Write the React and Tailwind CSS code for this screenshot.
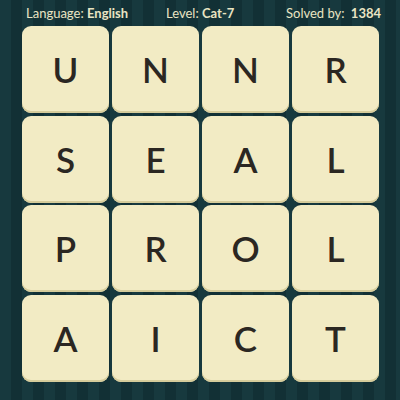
const rows = [
  ['U', 'N', 'N', 'R'],
  ['S', 'E', 'A', 'L'],
  ['P', 'R', 'O', 'L'],
  ['A', 'I', 'C', 'T'],
];

export default function App() {
  return (
    <div className="w-[400px] h-[400px] overflow-hidden bg-[#143439] bg-[repeating-linear-gradient(90deg,#17393e_0px,#17393e_11px,#123035_11px,#123035_22px)] font-['Lato',sans-serif]">
      {/* stats bar */}
      <div className="flex h-[26px] items-center pl-[26px] text-[13px] leading-none text-[#e9e4c3]">
        <div className="w-[140px]">
          Language: <span className="font-bold">English</span>
        </div>
        <div className="w-[120px]">
          Level: <span className="font-bold">Cat-7</span>
        </div>
        <div>
          Solved by: <span className="font-bold ml-[3px]">1384</span>
        </div>
      </div>

      {/* letter board */}
      <div className="grid grid-cols-[repeat(4,87px)] gap-x-[3px] gap-y-[2.5px] pl-[22px]">
        {rows.flat().map((ch, i) => (
          <div
            key={i}
            className="h-[87px] rounded-[9px] bg-[#f2ebc4] shadow-[inset_0_-2px_0_#d6cc9b] flex items-center justify-center text-[35px] font-semibold text-[#2b2722]"
          >
            {ch}
          </div>
        ))}
      </div>
    </div>
  );
}
